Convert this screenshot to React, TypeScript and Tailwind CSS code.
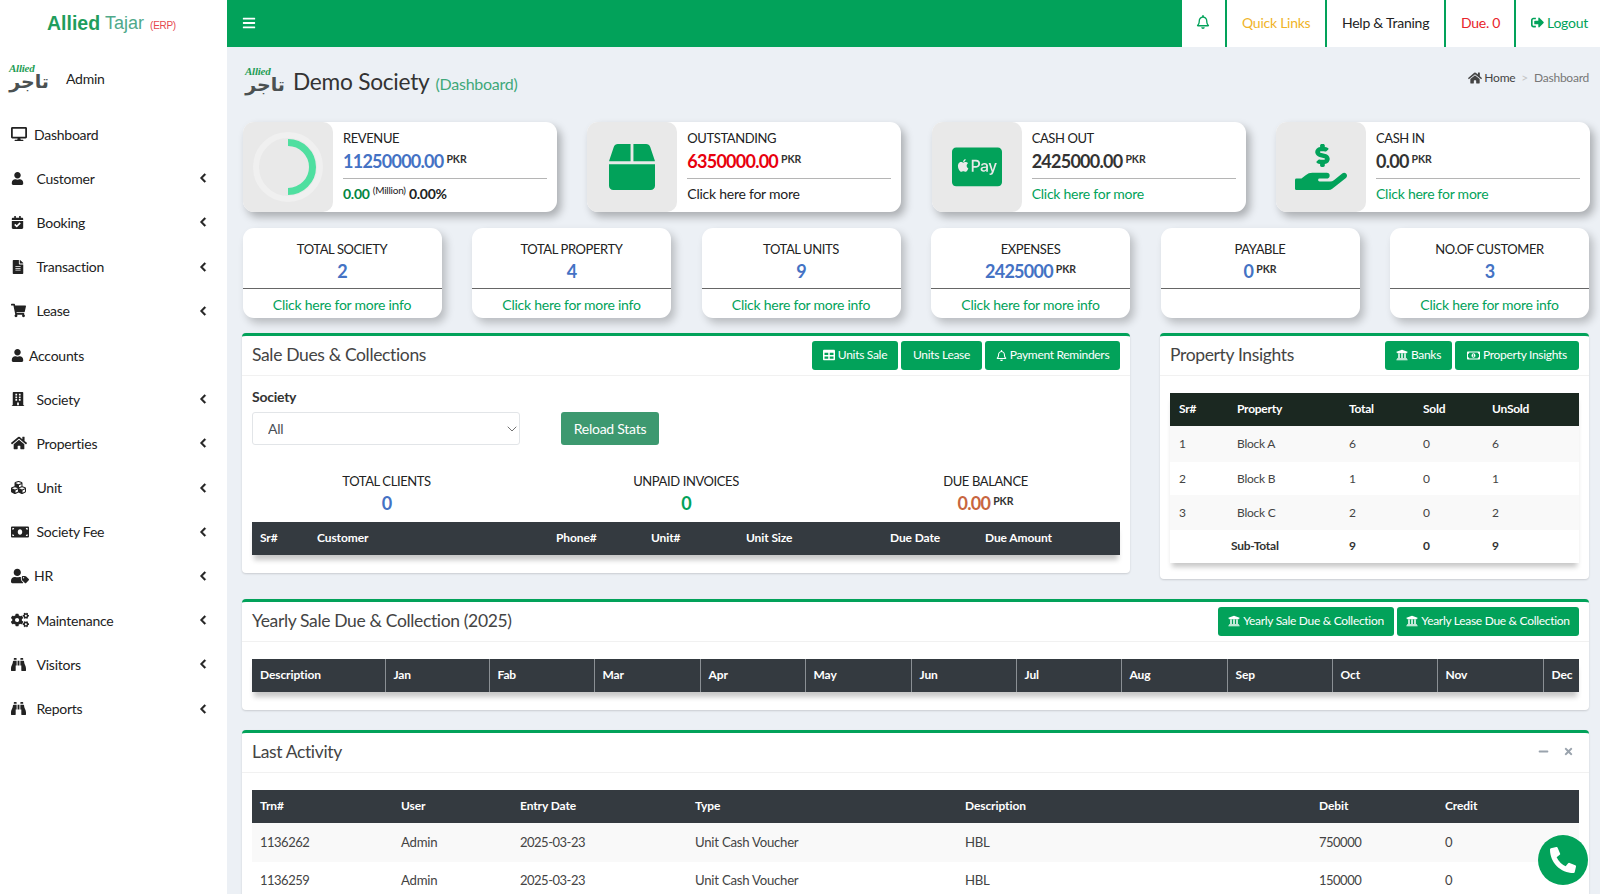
import type { ReactNode } from "react";
import {
  FaBars, FaBinoculars, FaBox, FaBuilding, FaCalendarCheck, FaCcApplePay, FaChevronLeft, FaCogs, FaCubes,
  FaDesktop, FaFileAlt, FaHandHoldingUsd, FaHome, FaMinus, FaMoneyBill, FaPhoneAlt, FaRegBell, FaRegMoneyBillAlt,
  FaShoppingCart, FaSignOutAlt, FaTable, FaTimes, FaUniversity, FaUser, FaUserTag,
} from "react-icons/fa";
import { ChevronDown } from "lucide-react";

const navItems = [
  { label: "Dashboard", icon: <FaDesktop size={16} />, gap: "w-[23px]", arrow: false },
  { label: "Customer", icon: <FaUser size={13} />, gap: "w-[25.5px]", arrow: true },
  { label: "Booking", icon: <FaCalendarCheck size={13} />, gap: "w-[25.5px]", arrow: true },
  { label: "Transaction", icon: <FaFileAlt size={14} />, gap: "w-[25.5px]", arrow: true },
  { label: "Lease", icon: <FaShoppingCart size={15} />, gap: "w-[25.5px]", arrow: true },
  { label: "Accounts", icon: <FaUser size={13} />, gap: "w-[18px]", arrow: false },
  { label: "Society", icon: <FaBuilding size={14} />, gap: "w-[25.5px]", arrow: true },
  { label: "Properties", icon: <FaHome size={16} />, gap: "w-[25.5px]", arrow: true },
  { label: "Unit", icon: <FaCubes size={15} />, gap: "w-[25.5px]", arrow: true },
  { label: "Society Fee", icon: <FaMoneyBill size={18} />, gap: "w-[25.5px]", arrow: true },
  { label: "HR", icon: <FaUserTag size={18} />, gap: "w-[23px]", arrow: true },
  { label: "Maintenance", icon: <FaCogs size={18} />, gap: "w-[25.5px]", arrow: true },
  { label: "Visitors", icon: <FaBinoculars size={15} />, gap: "w-[25.5px]", arrow: true },
  { label: "Reports", icon: <FaBinoculars size={15} />, gap: "w-[25.5px]", arrow: true },
];

const statCards = [
  { title: "TOTAL SOCIETY", value: "2", link: true },
  { title: "TOTAL PROPERTY", value: "4", link: true },
  { title: "TOTAL UNITS", value: "9", link: true },
  { title: "EXPENSES", value: "2425000", pkr: true, link: true },
  { title: "PAYABLE", value: "0", pkr: true, link: false },
  { title: "NO.OF CUSTOMER", value: "3", link: true },
];

const numCell = "px-[8px] pt-[1px] text-[13px] tracking-[-0.5px]";
const textCell = "px-[8px] pt-[1px]";

function Pkr() {
  return <sup className="ml-[3px] text-[10.5px] font-bold tracking-[-0.1px] text-[#333]">PKR</sup>;
}

function UrduLogo() {
  return (
    <span className="relative inline-block h-[28px] w-[40px]">
      <span dir="rtl" className="block font-['DejaVu_Sans',sans-serif] text-[19px] font-bold leading-[32px] tracking-normal text-[#4b5152]">
        تاجر
      </span>
      <span className="absolute -top-[2px] left-0 font-['Liberation_Serif',serif] text-[11px] font-bold italic leading-none text-[#1f9d55]">
        Allied
      </span>
    </span>
  );
}

function Sidebar() {
  return (
    <aside className="w-[227px] shrink-0 bg-white text-[#222]">
      <div className="flex h-[47px] items-center pl-[47px] font-['Liberation_Sans',sans-serif] tracking-normal">
        <span className="text-[19.5px] font-bold text-[#1f9d5c]">Allied</span>
        <span className="ml-[5px] text-[18px] font-light text-[#4fa98a]">Tajar</span>
        <span className="ml-[6px] mt-[3px] text-[10px] tracking-[-0.3px] text-[#e5484d]">(ERP)</span>
      </div>
      <div className="flex h-[65px] items-center pb-[2px] pl-[9px]">
        <UrduLogo />
        <span className="ml-[17px] text-[14px]">Admin</span>
      </div>
      <nav>
        {navItems.map((item) => (
          <div key={item.label} className="flex h-[44.2px] items-center pl-[11px] pr-[19px] text-[14px]">
            <span className={`flex shrink-0 items-center ${item.gap}`}>{item.icon}</span>
            <span>{item.label}</span>
            {item.arrow && <FaChevronLeft size={10} stroke="currentColor" strokeWidth={30} className="ml-auto" />}
          </div>
        ))}
      </nav>
    </aside>
  );
}

function TopBar() {
  return (
    <header className="flex h-[47px] shrink-0 bg-[#02a25a]">
      <div className="flex items-center pb-[1px] pl-[15px] text-white">
        <FaBars size={14} />
      </div>
      <div className="ml-auto flex bg-white text-[14px]">
        <div className="flex w-[43px] items-center justify-center pb-[3px] pr-[2px] text-[#02a25a]">
          <FaRegBell size={14} />
        </div>
        <div className="flex w-[100px] items-center border-l-2 border-[#02a25a] pb-[2px] pl-[15px] text-[#f0b429]">Quick Links</div>
        <div className="flex w-[119px] items-center border-l-2 border-[#02a25a] pb-[2px] pl-[15px] text-[#222]">Help &amp; Traning</div>
        <div className="flex w-[70px] items-center border-l-2 border-[#02a25a] pb-[2px] pl-[15px] text-[#e8232a]">Due. 0</div>
        <div className="flex w-[86px] items-center gap-[3px] border-l-2 border-[#02a25a] pb-[2px] pl-[15px] text-[#02a25a]">
          <FaSignOutAlt size={13} />
          Logout
        </div>
      </div>
    </header>
  );
}

function SummaryCard({ icon, children }: { icon: ReactNode; children: ReactNode }) {
  return (
    <div className="flex h-[90px] w-[314px] overflow-hidden rounded-[11px] bg-white shadow-[4px_5px_9px_rgba(0,0,0,0.28)]">
      <div className="flex w-[90px] shrink-0 items-center justify-center rounded-r-[10px] bg-[#e9e9e9]">{icon}</div>
      <div className="flex-1 px-[10px] text-[14px] text-[#222]">{children}</div>
    </div>
  );
}

function SummaryBody({ title, value, valueClass, foot }: { title: string; value: string; valueClass: string; foot: ReactNode }) {
  return (
    <>
      <div className="mt-[6px] h-[20px] text-[13px] leading-[20px] tracking-[-0.4px]">{title}</div>
      <div className={`h-[26px] text-[18px] font-bold leading-[26px] tracking-[-0.75px] ${valueClass}`}>
        {value}
        <Pkr />
      </div>
      <div className="mt-[4px] border-t border-[#b5b5b5]" />
      <div className="mt-[5px] leading-[20px]">{foot}</div>
    </>
  );
}

function RevenueRing() {
  return (
    <svg width="72" height="72" viewBox="0 0 72 72">
      <circle cx="36" cy="36" r="32" fill="none" stroke="#f0f0f0" strokeWidth="6" />
      <path d="M36 11.5 A24.5 24.5 0 0 1 36 60.5" fill="none" stroke="#4fdfa0" strokeWidth="7" />
    </svg>
  );
}

function StatCard({ title, value, pkr, link }: { title: string; value: string; pkr?: boolean; link: boolean }) {
  return (
    <div className="flex h-[90px] w-[199px] flex-col rounded-[11px] bg-white text-center text-[14px] shadow-[4px_5px_9px_rgba(0,0,0,0.22)]">
      <div className="mt-[11px] h-[20px] text-[13px] leading-[20px] tracking-[-0.4px] text-[#222]">{title}</div>
      <div className="h-[24px] text-[18px] font-bold leading-[24px] tracking-[-0.75px] text-[#4472c4]">
        {value}
        {pkr && <Pkr />}
      </div>
      <div className="mt-[5px] border-t border-[#666]" />
      <div className="flex-1 pt-[6px] leading-[20px] text-[#02a25a]">{link ? "Click here for more info" : ""}</div>
    </div>
  );
}

function GreenButton({ icon, label, widthClass }: { icon?: ReactNode; label: string; widthClass: string }) {
  return (
    <span className={`flex h-[29px] items-center justify-center gap-[3px] rounded-[3px] bg-[#02a25a] pb-[1px] text-[12px] tracking-[-0.3px] text-white ${widthClass}`}>
      {icon}
      {label}
    </span>
  );
}

function BoxHeader({ title, children }: { title: string; children?: ReactNode }) {
  return (
    <div className="flex h-[40px] items-center justify-between border-b border-[#f1f1f1] px-[10px]">
      <h3 className="pb-[1px] text-[17.5px] tracking-[-0.35px] text-[#444]">{title}</h3>
      <div className="flex gap-[3px]">{children}</div>
    </div>
  );
}

function StatBlock({ title, children }: { title: string; children: ReactNode }) {
  return (
    <div className="text-center">
      <div className="h-[20px] text-[13px] leading-[20px] tracking-[-0.4px] text-[#222]">{title}</div>
      <div className="h-[24px] text-[18px] font-bold leading-[24px] tracking-[-0.75px]">{children}</div>
    </div>
  );
}

function SaleDues() {
  const cols = [
    ["Sr#", "w-[57px]"], ["Customer", "w-[239px]"], ["Phone#", "w-[95px]"], ["Unit#", "w-[95px]"],
    ["Unit Size", "w-[144px]"], ["Due Date", "w-[95px]"], ["Due Amount", "w-[143px]"],
  ];
  return (
    <section className="h-[240px] w-[888px] rounded-[4px] border-t-[3px] border-[#02a25a] bg-white shadow-[0_1px_2px_rgba(0,0,0,0.15)]">
      <BoxHeader title="Sale Dues & Collections">
        <GreenButton icon={<FaTable size={12} />} label="Units Sale" widthClass="w-[86px]" />
        <GreenButton label="Units Lease" widthClass="w-[81px]" />
        <GreenButton icon={<FaRegBell size={11} />} label="Payment Reminders" widthClass="w-[135px]" />
      </BoxHeader>
      <div className="px-[10px]">
        <div className="mt-[11px] h-[20px] text-[14px] font-bold leading-[20px] text-[#333]">Society</div>
        <div className="flex items-center">
          <div className="relative mt-[5px] w-[268px]">
            <select className="block h-[33px] w-full appearance-none rounded-[3px] border border-[#e2e5e8] bg-white pl-[15px] text-[14px] text-[#495057]">
              <option>All</option>
            </select>
            <ChevronDown size={16} strokeWidth={1.25} className="pointer-events-none absolute right-0 top-[9px] text-[#555]" />
          </div>
          <span className="ml-[41px] mt-[5px] flex h-[33px] w-[98px] items-center justify-center rounded-[3px] bg-[#3d9970] text-[14px] text-white">
            Reload Stats
          </span>
        </div>
        <div className="mt-[26px] grid grid-cols-[269px_330px_269px]">
          <StatBlock title="TOTAL CLIENTS"><span className="text-[#4472c4]">0</span></StatBlock>
          <StatBlock title="UNPAID INVOICES"><span className="text-[#02a25a]">0</span></StatBlock>
          <StatBlock title="DUE BALANCE">
            <span className="text-[#c8663f]">0.00</span>
            <Pkr />
          </StatBlock>
        </div>
        <table className="mt-[7px] w-full table-fixed shadow-[0_7px_5px_-2px_rgba(0,0,0,0.22)]">
          <thead>
            <tr className="h-[33px] bg-[#343a40] text-left text-[12px] font-bold tracking-[-0.1px] text-white">
              {cols.map(([name, width]) => (
                <th key={name} className={`px-[8px] pb-[1px] ${width}`}>{name}</th>
              ))}
            </tr>
          </thead>
        </table>
      </div>
    </section>
  );
}

function PropertyInsights() {
  const rows = [
    ["1", "Block A", "6", "0", "6", "h-[36px] bg-[#f9f9f9]"],
    ["2", "Block B", "1", "0", "1", "h-[33px]"],
    ["3", "Block C", "2", "0", "2", "h-[35px] bg-[#f9f9f9]"],
  ];
  return (
    <section className="h-[246px] w-[429px] rounded-[4px] border-t-[3px] border-[#02a25a] bg-white shadow-[0_1px_2px_rgba(0,0,0,0.15)]">
      <BoxHeader title="Property Insights">
        <GreenButton icon={<FaUniversity size={12} />} label="Banks" widthClass="w-[67px]" />
        <GreenButton icon={<FaRegMoneyBillAlt size={13} />} label="Property Insights" widthClass="w-[124px]" />
      </BoxHeader>
      <div className="px-[10px] pt-[17px]">
        <table className="w-full table-fixed text-[12px] text-[#444] shadow-[0_6px_5px_-2px_rgba(0,0,0,0.22)]">
          <thead>
            <tr className="h-[33px] bg-[#1b2821] text-left font-bold text-white">
              <th className="w-[59px] pb-[2px] pl-[9px]">Sr#</th>
              <th className="w-[112px] pb-[2px] pl-[8px]">Property</th>
              <th className="w-[74px] pb-[2px] pl-[8px]">Total</th>
              <th className="w-[69px] pb-[2px] pl-[8px]">Sold</th>
              <th className="pb-[2px] pl-[8px]">UnSold</th>
            </tr>
          </thead>
          <tbody>
            {rows.map(([sr, name, total, sold, unsold, rowClass]) => (
              <tr key={sr} className={rowClass}>
                <td className="pl-[9px]">{sr}</td>
                <td className="pl-[8px]">{name}</td>
                <td className="pl-[8px]">{total}</td>
                <td className="pl-[8px]">{sold}</td>
                <td className="pl-[8px]">{unsold}</td>
              </tr>
            ))}
            <tr className="h-[33px] font-bold text-[#333]">
              <td colSpan={2} className="pb-[2px] pl-[61px]">Sub-Total</td>
              <td className="pb-[2px] pl-[8px]">9</td>
              <td className="pb-[2px] pl-[8px]">0</td>
              <td className="pb-[2px] pl-[8px]">9</td>
            </tr>
          </tbody>
        </table>
      </div>
    </section>
  );
}

function YearlyCard() {
  const months: [string, string][] = [
    ["Description", "w-[133px]"], ["Jan", "w-[104px]"], ["Fab", "w-[105px]"], ["Mar", "w-[106px]"], ["Apr", "w-[105px]"],
    ["May", "w-[106px]"], ["Jun", "w-[105px]"], ["Jul", "w-[105px]"], ["Aug", "w-[106px]"], ["Sep", "w-[105px]"],
    ["Oct", "w-[105px]"], ["Nov", "w-[106px]"], ["Dec", "w-[36px]"],
  ];
  return (
    <section className="mt-[20px] h-[111px] rounded-[4px] border-t-[3px] border-[#02a25a] bg-white shadow-[0_1px_2px_rgba(0,0,0,0.15)]">
      <BoxHeader title="Yearly Sale Due & Collection (2025)">
        <GreenButton icon={<FaUniversity size={12} />} label="Yearly Sale Due & Collection" widthClass="w-[176px]" />
        <GreenButton icon={<FaUniversity size={12} />} label="Yearly Lease Due & Collection" widthClass="w-[182px]" />
      </BoxHeader>
      <div className="px-[10px] pt-[17px]">
        <table className="w-full table-fixed shadow-[0_7px_5px_-2px_rgba(0,0,0,0.22)]">
          <thead>
            <tr className="h-[33px] bg-[#343a40] text-left text-[12px] font-bold tracking-[-0.1px] text-white">
              {months.map(([name, width], i) => (
                <th key={name} className={`pb-[2px] pl-[8px] ${width} ${i > 0 ? "border-l border-[#8a8f94]" : ""}`}>{name}</th>
              ))}
            </tr>
          </thead>
        </table>
      </div>
    </section>
  );
}

function LastActivity() {
  const rows = [
    ["1136262", "750000", "h-[39px] bg-[#f9f9f9]"],
    ["1136259", "150000", "h-[37px]"],
  ];
  return (
    <section className="mt-[20px] rounded-[4px] border-t-[3px] border-[#02a25a] bg-white shadow-[0_1px_2px_rgba(0,0,0,0.15)]">
      <div className="flex h-[40px] items-center justify-between border-b border-[#f1f1f1] px-[10px]">
        <h3 className="pb-[1px] text-[17.5px] tracking-[-0.35px] text-[#444]">Last Activity</h3>
        <div className="flex items-center gap-[14px] pb-[3px] pr-[5px] text-[#9aa3ad]">
          <FaMinus size={11} />
          <FaTimes size={11} />
        </div>
      </div>
      <div className="px-[10px] pb-[10px] pt-[17px]">
        <table className="w-full table-fixed text-[13.2px] text-[#444]">
          <thead>
            <tr className="h-[33px] bg-[#343a40] text-left text-[12px] font-bold tracking-[-0.1px] text-white">
              <th className="w-[141px] px-[8px] pb-[2px]">Trn#</th>
              <th className="w-[119px] px-[8px] pb-[2px]">User</th>
              <th className="w-[175px] px-[8px] pb-[2px]">Entry Date</th>
              <th className="w-[270px] px-[8px] pb-[2px]">Type</th>
              <th className="w-[354px] px-[8px] pb-[2px]">Description</th>
              <th className="w-[126px] px-[8px] pb-[2px]">Debit</th>
              <th className="px-[8px] pb-[2px]">Credit</th>
            </tr>
          </thead>
          <tbody>
            {rows.map(([trn, debit, rowClass]) => (
              <tr key={trn} className={rowClass}>
                <td className={numCell}>{trn}</td>
                <td className={textCell}>Admin</td>
                <td className={numCell}>2025-03-23</td>
                <td className={textCell}>Unit Cash Voucher</td>
                <td className={textCell}>HBL</td>
                <td className={numCell}>{debit}</td>
                <td className={numCell}>0</td>
              </tr>
            ))}
          </tbody>
        </table>
      </div>
    </section>
  );
}

export default function App() {
  return (
    <div className="relative flex h-[894px] overflow-hidden bg-[#ecf0f5] font-['Lato','Noto_Sans',sans-serif] tracking-[-0.25px]">
      <Sidebar />
      <main className="flex min-w-0 flex-1 flex-col">
        <TopBar />
        <div className="pl-[15px] pr-[11px]">
          <div className="flex h-[75px] items-center justify-between pb-[4px] pl-[3px]">
            <div className="flex items-center gap-[8px]">
              <UrduLogo />
              <h1 className="text-[22.7px] text-[#333]">Demo Society</h1>
              <span className="ml-[-2px] mt-[4px] text-[16px] text-[#3fa87a]">(Dashboard)</span>
            </div>
            <div className="mb-[10px] flex items-center text-[12px] text-[#444]">
              <FaHome size={14} className="mr-[2px]" />
              Home
              <span className="mx-[6px] text-[#c5c5c5]">&gt;</span>
              <span className="text-[#777]">Dashboard</span>
            </div>
          </div>

          <div className="-mr-[1px] flex justify-between pl-[1px]">
            <SummaryCard icon={<RevenueRing />}>
              <SummaryBody
                title="REVENUE"
                value="11250000.00"
                valueClass="text-[#4472c4]"
                foot={
                  <span className="font-bold">
                    <span className="text-[#02863f]">0.00</span>{" "}
                    <sup className="text-[10px] font-normal">(Million)</sup> 0.00%
                  </span>
                }
              />
            </SummaryCard>
            <SummaryCard icon={<FaBox size={46} className="text-[#02a25a]" />}>
              <SummaryBody title="OUTSTANDING" value="6350000.00" valueClass="text-[#e8000d]" foot="Click here for more" />
            </SummaryCard>
            <SummaryCard icon={<FaCcApplePay size={50} className="text-[#02a25a]" />}>
              <SummaryBody
                title="CASH OUT"
                value="2425000.00"
                valueClass="text-[#333]"
                foot={<span className="text-[#02a25a]">Click here for more</span>}
              />
            </SummaryCard>
            <SummaryCard icon={<FaHandHoldingUsd size={52} className="text-[#02a25a]" />}>
              <SummaryBody
                title="CASH IN"
                value="0.00"
                valueClass="text-[#333]"
                foot={<span className="text-[#02a25a]">Click here for more</span>}
              />
            </SummaryCard>
          </div>

          <div className="mt-[16px] flex justify-between pl-[0.5px]">
            {statCards.map((card) => (
              <StatCard key={card.title} {...card} />
            ))}
          </div>

          <div className="mt-[15px] flex items-start justify-between">
            <SaleDues />
            <PropertyInsights />
          </div>

          <YearlyCard />
          <LastActivity />
        </div>
      </main>
      <span className="absolute left-[1538px] top-[835px] flex h-[50px] w-[50px] items-center justify-center rounded-full bg-[#02a25a] text-white">
        <FaPhoneAlt size={26} />
      </span>
    </div>
  );
}
